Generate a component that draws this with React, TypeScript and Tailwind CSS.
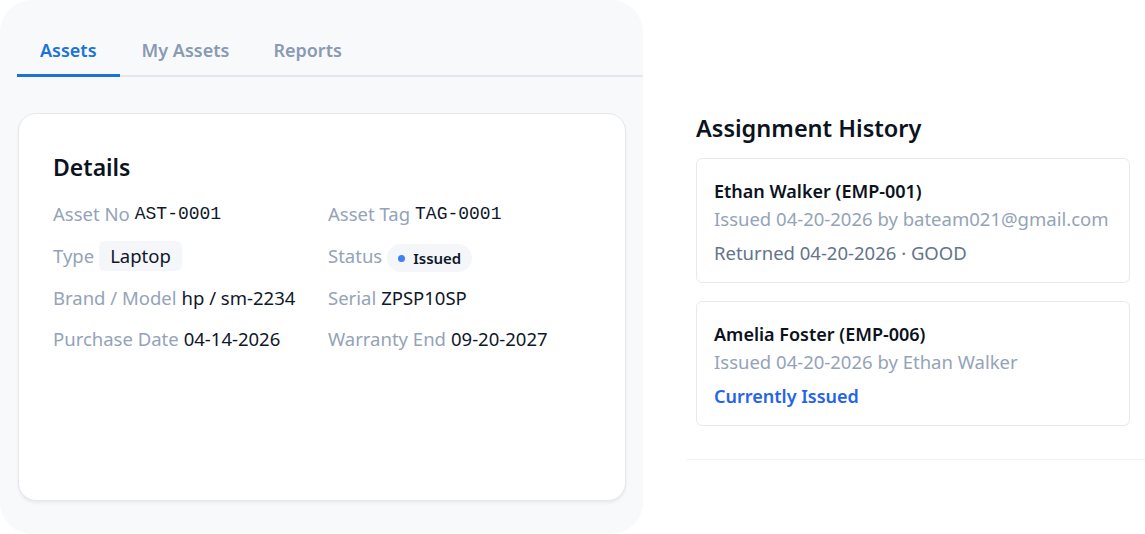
const details = [
  { label: "Asset No", value: "AST-0001", mono: true },
  { label: "Asset Tag", value: "TAG-0001", mono: true },
  { label: "Type", value: "Laptop", kind: "chip" },
  { label: "Status", value: "Issued", kind: "status" },
  { label: "Brand / Model", value: "hp / sm-2234" },
  { label: "Serial", value: "ZPSP10SP" },
  { label: "Purchase Date", value: "04-14-2026" },
  { label: "Warranty End", value: "09-20-2027" },
];

const tabs = ["Assets", "My Assets", "Reports"];

function DetailValue({ d }: { d: (typeof details)[number] }) {
  if (d.kind === "chip") {
    return (
      <span className="ml-[5px] rounded-md bg-[#f4f6f9] px-[11px] py-[1px] text-[#0f172a]">
        {d.value}
      </span>
    );
  }
  if (d.kind === "status") {
    return (
      <span className="ml-[5px] inline-flex translate-y-[2px] items-center gap-[8px] rounded-full bg-[#f4f6f9] px-[11px] py-[3px] text-[15px] font-semibold leading-[22px] text-[#0f172a]">
        <span className="h-[7px] w-[7px] rounded-full bg-[#3b82f6]" />
        {d.value}
      </span>
    );
  }
  return (
    <span
      className={
        d.mono
          ? "ml-[5px] font-['Liberation_Mono',monospace] text-[18px] text-[#0f172a]"
          : "ml-[5px] text-[#0f172a]"
      }
    >
      {d.value}
    </span>
  );
}

export default function App() {
  return (
    <div className="flex h-[534px] w-[1145px] bg-white font-['Noto_Sans',sans-serif]">
      {/* asset panel */}
      <div className="flex h-[534px] w-[643px] shrink-0 flex-col rounded-[32px] bg-[#f8f9fb]">
        <div className="ml-[17px] mt-[37px] flex border-b-2 border-[#e3e8ef]">
          {tabs.map((t, i) => (
            <div
              key={t}
              className={
                i === 0
                  ? "-mb-[2px] border-b-[3px] border-[#1a73d9] px-[23px] pb-[11px] text-[18px] font-semibold leading-[26px] text-[#1a73d9]"
                  : "px-[22px] pb-[12px] text-[18px] font-semibold leading-[26px] text-[#8a9ab3]"
              }
            >
              {t}
            </div>
          ))}
        </div>

        <div className="ml-[18px] mr-[17px] mt-[36px] h-[388px] rounded-[18px] border border-[#e5e7eb] bg-white px-[34px] pt-[38px] shadow-[0_2px_3px_rgba(15,23,42,0.06)]">
          <h2 className="mb-[18px] text-[23px] font-semibold leading-[30px] text-[#0b1220]">
            Details
          </h2>
          <div className="grid grid-cols-[275px_1fr] gap-y-[13px]">
            {details.map((d) => (
              <div key={d.label} className="flex items-center whitespace-nowrap text-[18.5px] leading-[28px]">
                <span className="text-[#94a3b8]">{d.label}</span>
                <DetailValue d={d} />
              </div>
            ))}
          </div>
        </div>
      </div>

      {/* assignment history */}
      <div className="ml-[44px] flex h-[460px] flex-1 flex-col border-b border-[#eef1f5] pl-[9px] pr-[15px] pt-[113px]">
        <h2 className="text-[23.5px] font-semibold leading-[30px] text-[#0b1220]">
          Assignment History
        </h2>
        <div className="mt-[15px] flex flex-col gap-[18px]">
          <div className="h-[125px] rounded-md border border-[#e5e9f0] px-[17px] pt-[18px]">
            <div className="text-[18px] font-semibold leading-[28px] text-[#0b1220]">
              Ethan Walker (EMP-001)
            </div>
            <div className="text-[18.5px] leading-[28px] text-[#94a3b8]">
              Issued 04-20-2026 by bateam021@gmail.com
            </div>
            <div className="mt-[6px] text-[18.5px] leading-[28px] text-[#64748b]">
              Returned 04-20-2026 · GOOD
            </div>
          </div>
          <div className="h-[125px] rounded-md border border-[#e5e9f0] px-[17px] pt-[18px]">
            <div className="text-[18px] font-semibold leading-[28px] text-[#0b1220]">
              Amelia Foster (EMP-006)
            </div>
            <div className="text-[18.5px] leading-[28px] text-[#94a3b8]">
              Issued 04-20-2026 by Ethan Walker
            </div>
            <div className="mt-[6px] text-[18px] font-semibold leading-[28px] text-[#2563eb]">
              Currently Issued
            </div>
          </div>
        </div>
      </div>
    </div>
  );
}
